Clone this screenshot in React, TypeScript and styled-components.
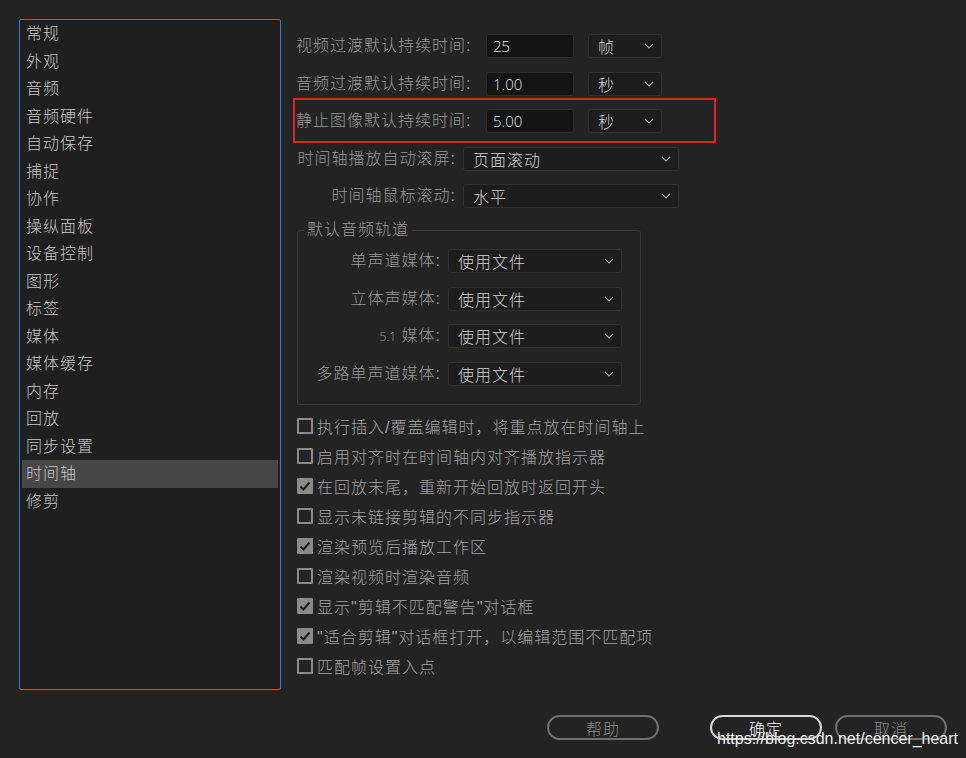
import React from "react";
import styled, { createGlobalStyle, css } from "styled-components";

const Global = createGlobalStyle`
  html, body { margin: 0; padding: 0; background: #232323; }
  body { font-family: "Liberation Sans", "Noto Sans CJK SC", sans-serif; font-weight: 300; }
  * { box-sizing: border-box; }
`;

const Page = styled.div`
  position: relative;
  width: 966px;
  height: 758px;
  padding: 19px 19px 0 19px;
  background: #232323;
  display: flex;
  flex-direction: column;
  overflow: hidden;
`;

const Top = styled.div`
  display: flex;
  height: 671px;
`;

const Sidebar = styled.ul`
  list-style: none;
  margin: 0;
  padding: 0 2px;
  width: 262px;
  height: 671px;
  border: 1px solid #2f7fd4;
  border-radius: 2px;
  background: #1f1f1f;
`;

const SideItem = styled.li<{ $active?: boolean }>`
  height: 27.5px;
  display: flex;
  align-items: center;
  padding: 0 0 3px 4px;
  font-size: 16px;
  letter-spacing: 1px;
  color: #c6c6c6;
  background: ${(p) => (p.$active ? "#474747" : "transparent")};
`;

const Content = styled.div`
  flex: 1;
  padding: 15px 0 0 15px;
  display: flex;
  flex-direction: column;
`;

const Rows = styled.div`
  display: flex;
  flex-direction: column;
  gap: 13.5px;
`;

const Row = styled.div<{ $highlight?: boolean }>`
  position: relative;
  display: flex;
  align-items: center;
  height: 24px;
  ${(p) =>
    p.$highlight &&
    css`
      &::after {
        content: "";
        position: absolute;
        left: -3px;
        top: -11px;
        width: 419px;
        height: 41px;
        border: 2px solid #e4202b;
        pointer-events: none;
      }
    `}
`;

const Label = styled.span<{ $width: number; $right?: boolean }>`
  width: ${(p) => p.$width}px;
  flex: none;
  text-align: ${(p) => (p.$right ? "right" : "left")};
  padding-right: ${(p) => (p.$right ? 7 : 0)}px;
  font-size: 16px;
  letter-spacing: 1px;
  line-height: 24px;
  color: #999999;
  white-space: nowrap;
`;

const Small = styled.span`
  font-family: "Open Sans", sans-serif;
  font-size: 12px;
  letter-spacing: 0;
  color: #8fa0b0;
`;

const NumInput = styled.div`
  width: 88px;
  height: 24px;
  flex: none;
  background: #141414;
  border: 1px solid #2e2e2e;
  border-radius: 3px;
  padding-left: 6px;
  display: flex;
  align-items: center;
  font-family: "Open Sans", sans-serif;
  font-size: 15px;
  color: #dfe6ee;
`;

const SelectBox = styled.div<{ $width: number; $ml?: number }>`
  width: ${(p) => p.$width}px;
  margin-left: ${(p) => p.$ml ?? 0}px;
  height: 24px;
  flex: none;
  background: #1d1d1d;
  border: 1px solid #303030;
  border-radius: 3px;
  padding: 0 7px 0 9px;
  display: flex;
  align-items: center;
  justify-content: space-between;
  font-size: 16px;
  letter-spacing: 1px;
  color: #d2d2d2;
`;

const Chevron = () => (
  <svg width="10" height="6" viewBox="0 0 10 6">
    <polyline points="1,1 5,5 9,1" fill="none" stroke="#a8a8a8" strokeWidth="1.1" />
  </svg>
);

const Select = ({ value, width, ml }: { value: string; width: number; ml?: number }) => (
  <SelectBox $width={width} $ml={ml}>
    <span>{value}</span>
    <Chevron />
  </SelectBox>
);

const Group = styled.fieldset`
  margin: 12px 0 0 1px;
  width: 344px;
  padding: 9px 6px 18px 6px;
  border: 1px solid #383838;
  border-radius: 3px;
  display: flex;
  flex-direction: column;
  gap: 13.5px;
`;

const Legend = styled.legend`
  padding: 0 3px;
  font-size: 16px;
  letter-spacing: 1px;
  line-height: 20px;
  margin-top: 2px;
  color: #9a9a9a;
`;

const Checks = styled.div`
  margin-top: 6px;
  display: flex;
  flex-direction: column;
`;

const CheckRow = styled.div`
  height: 30px;
  display: flex;
  align-items: center;
  gap: 4px;
  padding-left: 1px;
  font-size: 16px;
  letter-spacing: 1px;
  color: #a2a2a2;
  white-space: nowrap;
`;

const Box = styled.span<{ $checked?: boolean }>`
  width: 16px;
  height: 16px;
  flex: none;
  border: 2px solid #8a8a8a;
  border-radius: 1px;
  background: ${(p) => (p.$checked ? "#8a8a8a" : "transparent")};
  display: flex;
  align-items: center;
  justify-content: center;
`;

const Check = ({ checked, children }: { checked?: boolean; children: React.ReactNode }) => (
  <CheckRow>
    <Box $checked={checked}>
      {checked && (
        <svg width="12" height="12" viewBox="0 0 12 12">
          <polyline points="1.5,6.5 4.5,9.5 10.5,2.5" fill="none" stroke="#1e1e1e" strokeWidth="2" />
        </svg>
      )}
    </Box>
    <span>{children}</span>
  </CheckRow>
);

const Footer = styled.div`
  margin-top: 25px;
  display: flex;
  justify-content: flex-end;
`;

const Button = styled.div<{ $primary?: boolean; $ml: number }>`
  width: 112px;
  height: 25px;
  margin-left: ${(p) => p.$ml}px;
  border: 2px solid ${(p) => (p.$primary ? "#d8d8d8" : "#707070")};
  border-radius: 13px;
  display: flex;
  align-items: center;
  justify-content: center;
  font-size: 16px;
  letter-spacing: 1px;
  color: ${(p) => (p.$primary ? "#f2f2f2" : "#8a8a8a")};
`;

const Watermark = styled.div`
  position: absolute;
  left: 717px;
  top: 729px;
  font-family: "Liberation Sans", Arial, sans-serif;
  font-weight: 400;
  font-size: 16px;
  line-height: 20px;
  color: #f4f4f4;
  text-shadow: 0 0 1px rgba(0, 0, 0, 0.4);
  white-space: nowrap;
`;

const sideItems = [
  "常规", "外观", "音频", "音频硬件", "自动保存", "捕捉", "协作", "操纵面板", "设备控制",
  "图形", "标签", "媒体", "媒体缓存", "内存", "回放", "同步设置", "时间轴", "修剪",
];

const checks: [string, boolean][] = [
  ["执行插入/覆盖编辑时，将重点放在时间轴上", false],
  ["启用对齐时在时间轴内对齐播放指示器", false],
  ["在回放末尾，重新开始回放时返回开头", true],
  ["显示未链接剪辑的不同步指示器", false],
  ["渲染预览后播放工作区", true],
  ["渲染视频时渲染音频", false],
  ["显示\"剪辑不匹配警告\"对话框", true],
  ["\"适合剪辑\"对话框打开，以编辑范围不匹配项", true],
  ["匹配帧设置入点", false],
];

export default function App() {
  return (
    <Page>
      <Global />
      <Top>
        <Sidebar>
          {sideItems.map((s) => (
            <SideItem key={s} $active={s === "时间轴"}>{s}</SideItem>
          ))}
        </Sidebar>
        <Content>
          <Rows>
            <Row>
              <Label $width={190}>视频过渡默认持续时间:</Label>
              <NumInput>25</NumInput>
              <Select value="帧" width={74} ml={14} />
            </Row>
            <Row>
              <Label $width={190}>音频过渡默认持续时间:</Label>
              <NumInput>1.00</NumInput>
              <Select value="秒" width={74} ml={14} />
            </Row>
            <Row $highlight>
              <Label $width={190}>静止图像默认持续时间:</Label>
              <NumInput>5.00</NumInput>
              <Select value="秒" width={74} ml={14} />
            </Row>
            <Row>
              <Label $width={167} $right>时间轴播放自动滚屏:</Label>
              <Select value="页面滚动" width={216} />
            </Row>
            <Row>
              <Label $width={167} $right>时间轴鼠标滚动:</Label>
              <Select value="水平" width={216} />
            </Row>
          </Rows>
          <Group>
            <Legend>默认音频轨道</Legend>
            <Row>
              <Label $width={144} $right>单声道媒体:</Label>
              <Select value="使用文件" width={174} />
            </Row>
            <Row>
              <Label $width={144} $right>立体声媒体:</Label>
              <Select value="使用文件" width={174} />
            </Row>
            <Row>
              <Label $width={144} $right><Small>5.1</Small> 媒体:</Label>
              <Select value="使用文件" width={174} />
            </Row>
            <Row>
              <Label $width={144} $right>多路单声道媒体:</Label>
              <Select value="使用文件" width={174} />
            </Row>
          </Group>
          <Checks>
            {checks.map(([t, c]) => (
              <Check key={t} checked={c}>{t}</Check>
            ))}
          </Checks>
        </Content>
      </Top>
      <Footer>
        <Button $ml={0}>帮助</Button>
        <Button $ml={51} $primary>确定</Button>
        <Button $ml={13}>取消</Button>
      </Footer>
      <Watermark>https://blog.csdn.net/cencer_heart</Watermark>
    </Page>
  );
}
